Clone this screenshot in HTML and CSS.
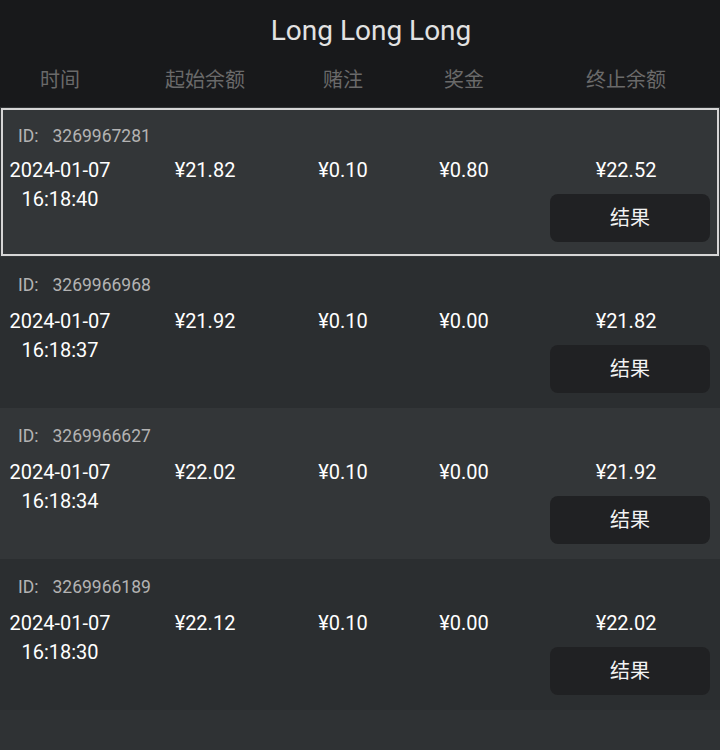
FILE: index.html
```html
<!DOCTYPE html>
<html lang="zh">
<head>
<meta charset="utf-8">
<link rel="stylesheet" href="styles.css">
</head>
<body>
<div class="page">
  <header class="top">
    <h1 class="title">Long Long Long</h1>
    <div class="cols head">
      <div>时间</div><div>起始余额</div><div>赌注</div><div>奖金</div><div>终止余额</div>
    </div>
  </header>
  <div class="list">
    <div class="row odd selected">
      <div class="id"><span>ID:</span><span>3269967281</span></div>
      <div class="cols vals">
        <div>2024-01-07<br>16:18:40</div><div>¥21.82</div><div>¥0.10</div><div>¥0.80</div>
        <div class="last">¥22.52<div class="btn">结果</div></div>
      </div>
    </div>
    <div class="row even">
      <div class="id"><span>ID:</span><span>3269966968</span></div>
      <div class="cols vals">
        <div>2024-01-07<br>16:18:37</div><div>¥21.92</div><div>¥0.10</div><div>¥0.00</div>
        <div class="last">¥21.82<div class="btn">结果</div></div>
      </div>
    </div>
    <div class="row odd">
      <div class="id"><span>ID:</span><span>3269966627</span></div>
      <div class="cols vals">
        <div>2024-01-07<br>16:18:34</div><div>¥22.02</div><div>¥0.10</div><div>¥0.00</div>
        <div class="last">¥21.92<div class="btn">结果</div></div>
      </div>
    </div>
    <div class="row even">
      <div class="id"><span>ID:</span><span>3269966189</span></div>
      <div class="cols vals">
        <div>2024-01-07<br>16:18:30</div><div>¥22.12</div><div>¥0.10</div><div>¥0.00</div>
        <div class="last">¥22.02<div class="btn">结果</div></div>
      </div>
    </div>
  </div>
</div>
</body>
</html>
```
FILE: styles.css
```css
html, body {
  margin: 0;
  padding: 0;
  background: #2f3234;
}
body {
  font-family: Roboto, "Noto Sans CJK SC", sans-serif;
  color: #ffffff;
}
.page {
  width: 720px;
  height: 750px;
  overflow: hidden;
  background: #2f3234;
}
.top {
  background: #18191b;
  height: 107px;
  box-sizing: border-box;
  padding-top: 12px;
}
.title {
  margin: 0;
  padding-left: 22px;
  font-weight: 400;
  font-size: 28px;
  line-height: 38px;
  text-align: center;
  color: #e2e2e2;
}
.cols {
  display: grid;
  grid-template-columns: 120px 170px 106px 136px 188px;
  text-align: center;
}
.head {
  margin-top: 17px;
  font-size: 20px;
  line-height: 26px;
  color: #6a6a6a;
}
.row {
  height: 151px;
  box-sizing: border-box;
  padding-top: 16px;
}
.odd { background: #333638; }
.even { background: #2b2e30; }
.selected {
  outline: 2px solid #d6d6d6;
  outline-offset: -3px;
}
.row:first-child { height: 150px; padding-top: 17px; }
.id {
  display: flex;
  gap: 14px;
  padding-left: 18px;
  font-size: 17.5px;
  line-height: 24px;
  color: #b3b3b3;
}
.vals {
  margin-top: 10px;
  font-size: 20px;
  line-height: 29px;
  color: #ffffff;
}
.row:first-child .vals { margin-top: 8px; }
.last {
  display: flex;
  flex-direction: column;
  align-items: center;
}
.btn {
  margin-top: 9px;
  margin-left: 8px;
  width: 160px;
  height: 48px;
  border-radius: 8px;
  background: #202123;
  font-size: 20px;
  line-height: 48px;
  text-align: center;
  color: #f2f2f2;
}
```
